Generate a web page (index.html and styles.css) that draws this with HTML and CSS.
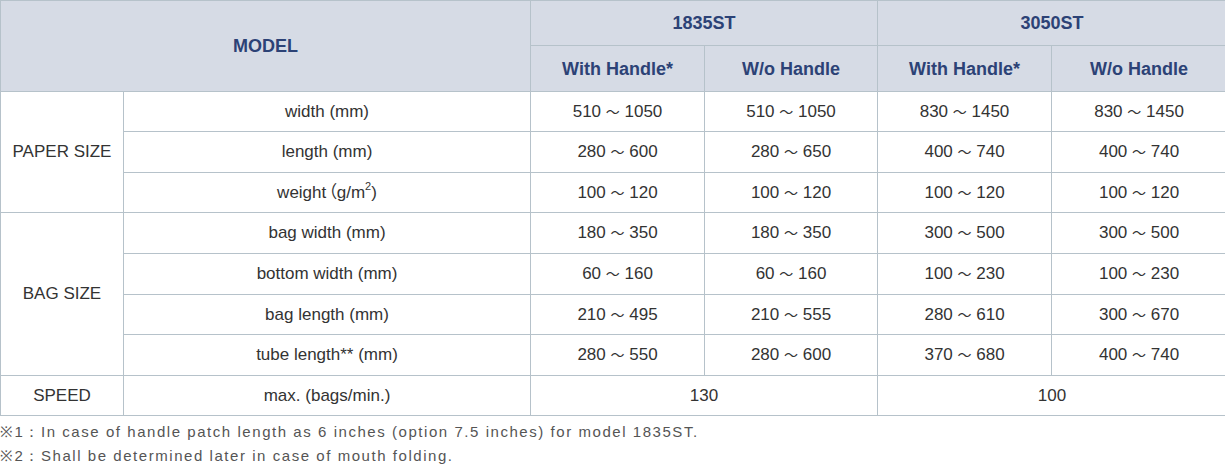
FILE: index.html
```html
<!DOCTYPE html>
<html>
<head>
<meta charset="utf-8">
<link rel="stylesheet" href="styles.css">
</head>
<body>
<div class="wrap">
<table class="spec">
  <colgroup>
    <col class="c1"><col class="c2"><col class="c3"><col class="c4"><col class="c5"><col class="c6">
  </colgroup>
  <thead>
    <tr class="h1">
      <th colspan="2" rowspan="2">MODEL</th>
      <th colspan="2">1835ST</th>
      <th colspan="2">3050ST</th>
    </tr>
    <tr class="h2">
      <th>With Handle*</th>
      <th>W/o Handle</th>
      <th>With Handle*</th>
      <th>W/o Handle</th>
    </tr>
  </thead>
  <tbody>
    <tr class="r40">
      <td rowspan="3">PAPER SIZE</td>
      <td>width (mm)</td>
      <td>510 <span class="t">～</span> 1050</td><td>510 <span class="t">～</span> 1050</td><td>830 <span class="t">～</span> 1450</td><td>830 <span class="t">～</span> 1450</td>
    </tr>
    <tr class="r41">
      <td>length (mm)</td>
      <td>280 <span class="t">～</span> 600</td><td>280 <span class="t">～</span> 650</td><td>400 <span class="t">～</span> 740</td><td>400 <span class="t">～</span> 740</td>
    </tr>
    <tr class="r40">
      <td>weight<span class="fp">（</span>g/m<sup>2</sup>)</td>
      <td>100 <span class="t">～</span> 120</td><td>100 <span class="t">～</span> 120</td><td>100 <span class="t">～</span> 120</td><td>100 <span class="t">～</span> 120</td>
    </tr>
    <tr class="r41">
      <td rowspan="4">BAG SIZE</td>
      <td>bag width (mm)</td>
      <td>180 <span class="t">～</span> 350</td><td>180 <span class="t">～</span> 350</td><td>300 <span class="t">～</span> 500</td><td>300 <span class="t">～</span> 500</td>
    </tr>
    <tr class="r41">
      <td>bottom width (mm)</td>
      <td>60 <span class="t">～</span> 160</td><td>60 <span class="t">～</span> 160</td><td>100 <span class="t">～</span> 230</td><td>100 <span class="t">～</span> 230</td>
    </tr>
    <tr class="r40">
      <td>bag length (mm)</td>
      <td>210 <span class="t">～</span> 495</td><td>210 <span class="t">～</span> 555</td><td>280 <span class="t">～</span> 610</td><td>300 <span class="t">～</span> 670</td>
    </tr>
    <tr class="r41">
      <td>tube length** (mm)</td>
      <td>280 <span class="t">～</span> 550</td><td>280 <span class="t">～</span> 600</td><td>370 <span class="t">～</span> 680</td><td>400 <span class="t">～</span> 740</td>
    </tr>
    <tr class="r40">
      <td>SPEED</td>
      <td>max. (bags/min.)</td>
      <td colspan="2">130</td>
      <td colspan="2">100</td>
    </tr>
  </tbody>
</table>
<div class="notes">
  <p>※1：In case of handle patch length as 6 inches (option 7.5 inches) for model 1835ST.</p>
  <p>※2：Shall be determined later in case of mouth folding.</p>
</div>
</div>
</body>
</html>
```

FILE: styles.css
```css
html, body {
  margin: 0;
  padding: 0;
  background: #ffffff;
  overflow: hidden;
}
.wrap {
  width: 1226px;
}
.spec {
  width: 1226px;
  border-collapse: collapse;
  table-layout: fixed;
  font-family: "Liberation Sans", Arial, sans-serif;
  font-size: 17px;
  line-height: 20px;
  color: #333333;
}
.c1 { width: 123px; }
.c2 { width: 407px; }
.c3 { width: 174px; }
.c4 { width: 173px; }
.c5 { width: 174px; }
.c6 { width: 175px; }
.spec th, .spec td {
  border: 1px solid #b6c2ca;
  text-align: center;
  vertical-align: middle;
  padding: 0;
  white-space: nowrap;
}
.spec th {
  background: #d6dbe5;
  color: #2c4276;
  font-weight: bold;
  font-size: 18px;
}
.h1 { height: 45px; }
.h2 { height: 46px; }
.r40 { height: 40px; }
.r41 { height: 41px; }
.t {
  font-family: "Noto Sans CJK JP", sans-serif;
  font-size: 14px;
  line-height: 1;
}
.fp {
  font-family: "Noto Sans CJK JP", sans-serif;
  font-feature-settings: "palt" 1;
  line-height: 1;
  margin-left: 2px;
}
.spec sup {
  font-size: 11px;
  line-height: 0;
  vertical-align: 8px;
}
.notes {
  font-family: "Liberation Sans", Arial, sans-serif;
  font-size: 15px;
  color: #555555;
  letter-spacing: 1.55px;
  padding-top: 4px;
}
.notes p {
  margin: 0;
  line-height: 24px;
}
```
